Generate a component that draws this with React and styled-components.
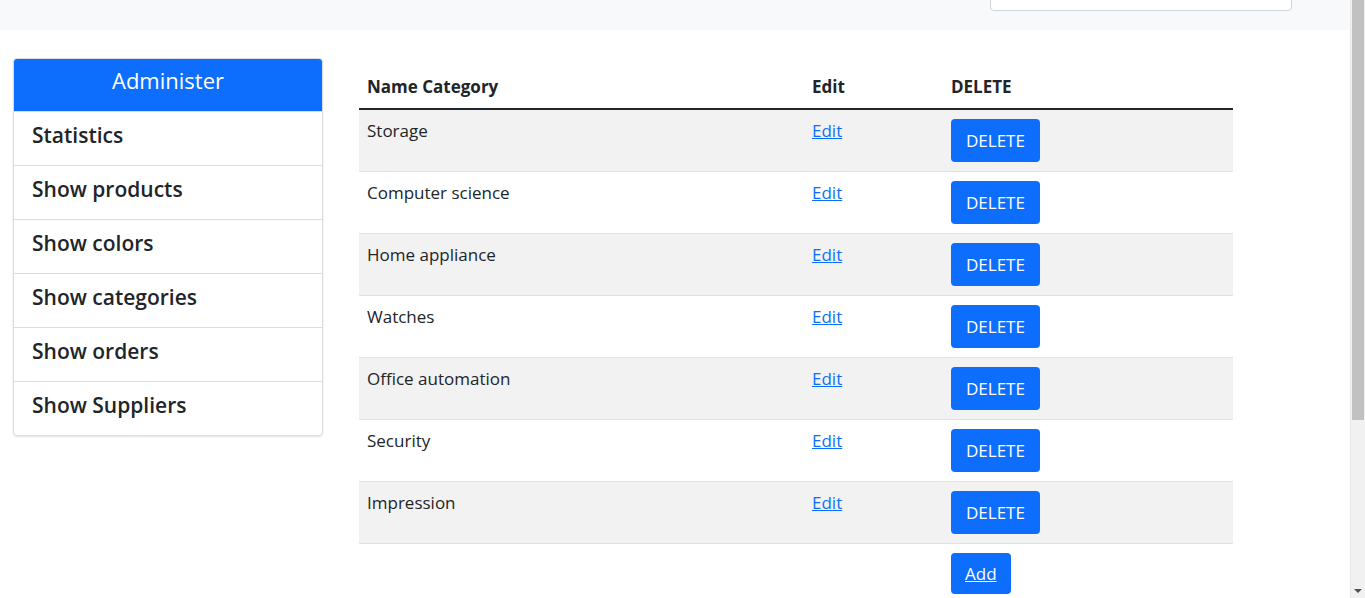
import styled, { createGlobalStyle } from 'styled-components';

const GlobalStyle = createGlobalStyle`
    body {
        margin: 0;
        font-family: "Open Sans", "Noto Sans", sans-serif;
        color: #212529;
        background: #fff;
    }
`

const categories = [
    'Storage',
    'Computer science',
    'Home appliance',
    'Watches',
    'Office automation',
    'Security',
    'Impression',
]

const menu = [
    'Statistics',
    'Show products',
    'Show colors',
    'Show categories',
    'Show orders',
    'Show Suppliers',
]

const App = () => {
    return (
        <Page>
            <GlobalStyle />
            <NavBar>
                <SearchInput type="search" />
            </NavBar>
            <Main>
                <SideCard>
                    <CardHeader>Administer</CardHeader>
                    {menu.map((item) => (
                        <MenuItem key={item}>{item}</MenuItem>
                    ))}
                </SideCard>
                <TableWrap>
                    <Table>
                        <colgroup>
                            <col style={{ width: 445 }} />
                            <col style={{ width: 139 }} />
                            <col />
                        </colgroup>
                        <thead>
                            <tr>
                                <Th>Name Category</Th>
                                <Th>Edit</Th>
                                <Th>DELETE</Th>
                            </tr>
                        </thead>
                        <tbody>
                            {categories.map((name, i) => (
                                <Row key={name} $striped={i % 2 === 0}>
                                    <Td>{name}</Td>
                                    <Td><EditLink href="#">Edit</EditLink></Td>
                                    <Td><Button>DELETE</Button></Td>
                                </Row>
                            ))}
                            <Row>
                                <Td></Td>
                                <Td></Td>
                                <Td><Button $small><AddLink href="#">Add</AddLink></Button></Td>
                            </Row>
                        </tbody>
                    </Table>
                </TableWrap>
            </Main>
            {/* page scrollbar as seen in the screenshot */}
            <ScrollTrack>
                <ScrollThumb />
                <ScrollArrow />
            </ScrollTrack>
        </Page>
    )
}

const Page = styled.div`
    min-height: 850px;
`

const NavBar = styled.nav`
    height: 30px;
    background: #f8f9fa;
    overflow: hidden;
    display: flex;
    justify-content: flex-end;
    padding-right: 73px;
`

const SearchInput = styled.input`
    width: 302px;
    height: 39px;
    margin-top: -28px;
    box-sizing: border-box;
    border: 1px solid #ced4da;
    border-radius: 4px;
    background: #fff;
`

const Main = styled.div`
    display: flex;
    align-items: flex-start;
    padding: 28px 0 0 13px;
`

const SideCard = styled.div`
    width: 310px;
    box-sizing: border-box;
    border: 1px solid #dcdcdc;
    border-radius: 4px;
    box-shadow: 0 1px 2px rgba(0, 0, 0, 0.12);
    overflow: hidden;
`

const CardHeader = styled.div`
    background: #0d6efd;
    color: #fff;
    text-align: center;
    font-size: 22px;
    font-weight: 500;
    line-height: 36px;
    padding: 3px 0 13px;
`

const MenuItem = styled.div`
    font-size: 21px;
    font-weight: 600;
    line-height: 30px;
    padding: 8px 18px 15px;
    border-top: 1px solid #dcdcdc;
    &:first-of-type {
        border-top: none;
    }
`

const TableWrap = styled.div`
    margin: 9px 0 0 36px;
`

const Table = styled.table`
    width: 874px;
    table-layout: fixed;
    border-collapse: collapse;
    font-size: 17px;
`

const Th = styled.th`
    text-align: left;
    font-weight: 700;
    line-height: 24px;
    padding: 8px 8px 9px;
    border-bottom: 2px solid #212529;
`

const Row = styled.tr`
    background: ${(p) => (p.$striped ? '#f2f2f2' : '#fff')};
    border-bottom: 1px solid #dee2e6;
`

const Td = styled.td`
    vertical-align: top;
    line-height: 24px;
    padding: 9px 8px;
`

const EditLink = styled.a`
    color: #0d6efd;
    text-decoration: underline;
`

const Button = styled.button`
    display: block;
    height: ${(p) => (p.$small ? '41px' : '43px')};
    padding: 0 ${(p) => (p.$small ? '14px' : '15px')};
    border: none;
    border-radius: 4px;
    background: #0d6efd;
    color: #fff;
    font-family: inherit;
    font-size: 17px;
`

const AddLink = styled.a`
    color: #fff;
    text-decoration: underline;
`

const ScrollTrack = styled.div`
    position: fixed;
    top: 0;
    right: 0;
    bottom: 0;
    width: 15px;
    background: #f1f1f1;
    border-left: 1px solid #e8e8e8;
    box-sizing: border-box;
`

const ScrollThumb = styled.div`
    margin: 0 1px 0 1px;
    height: 420px;
    background: #c1c1c1;
`

const ScrollArrow = styled.div`
    position: absolute;
    bottom: 5px;
    left: 3px;
    width: 0;
    height: 0;
    border-left: 4px solid transparent;
    border-right: 4px solid transparent;
    border-top: 4px solid #505050;
`

export default App
